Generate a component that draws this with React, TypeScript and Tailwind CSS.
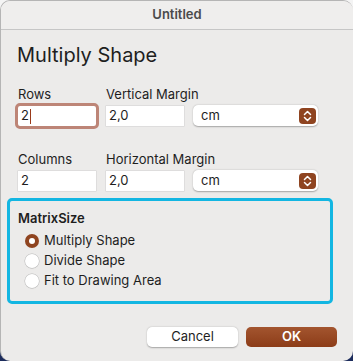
import React from 'react';

const font = { fontFamily: 'Inter, "Liberation Sans", sans-serif' };

const Field = ({ value, w, focus }: { value: string; w: string; focus?: boolean }) => (
  <div
    className={`h-[20px] ${w} bg-white flex items-center pl-[3px] text-[13px] text-[#1e1e1e] ${
      focus ? 'outline-[3px] outline outline-[#bd8577] rounded-[2px]' : 'shadow-[0_0_0_0.5px_#cfcfcf]'
    }`}
  >
    {value}
    {focus && <span className="w-[1.5px] h-[15px] bg-[#9a3a1a] ml-[1px]" />}
  </div>
);

const UnitSelect = () => (
  <div className="h-[21px] w-[125px] shrink-0 bg-white rounded-[5px] shadow-[0_0.5px_1.5px_rgba(0,0,0,0.3)] flex items-center justify-between pl-[8px] pr-[2px] text-[13px] text-[#1e1e1e]">
    <span>cm</span>
    <span className="w-[17px] h-[16px] rounded-[4px] bg-[#8f4420] flex items-center justify-center">
      <svg width="9" height="12" viewBox="0 0 9 12" fill="none" stroke="white" strokeWidth="1.5" strokeLinecap="round" strokeLinejoin="round">
        <path d="M1.5 4.5 L4.5 1.5 L7.5 4.5" />
        <path d="M1.5 7.5 L4.5 10.5 L7.5 7.5" />
      </svg>
    </span>
  </div>
);

const Radio = ({ label, checked }: { label: string; checked?: boolean }) => (
  <div className="flex items-center h-[20px] gap-[5px]">
    {checked ? (
      <span className="w-[14px] h-[14px] rounded-full bg-[#8f4420] flex items-center justify-center">
        <span className="w-[6px] h-[6px] rounded-full bg-white" />
      </span>
    ) : (
      <span className="w-[14px] h-[14px] rounded-full bg-white shadow-[0_0_0_0.5px_#b9b9b9,0_0.5px_1px_rgba(0,0,0,0.15)]" />
    )}
    <span className="text-[13px] text-[#1e1e1e]">{label}</span>
  </div>
);

const Label = ({ children }: { children: React.ReactNode }) => (
  <span className="text-[13px] leading-[16px] text-[#1e1e1e] whitespace-nowrap">{children}</span>
);

export default function App() {
  return (
    <div
      className="w-[353px] h-[361px] bg-[linear-gradient(to_bottom,#f4f4f4_37%,#1c2c5c_37%)]"
      style={font}
    >
      <div className="w-[353px] h-[361px] bg-[#ecebea] rounded-[10px] border border-[#b5b5b5] border-r-0 border-b-0 overflow-hidden flex flex-col">
        <div className="h-[29px] shrink-0 bg-[#efeeed] border-b border-[#c6c6c6] flex items-center justify-center text-[13px] font-semibold text-[#4b4b4b]">
          Untitled
        </div>
        <div className="px-[16px] pt-[13px] flex flex-col">
          <div className="text-[20px] leading-[24px] text-[#1e1e1e]">Multiply Shape</div>

          <div className="mt-[19px] flex items-end">
            <div className="flex flex-col gap-[4px] w-[89px] shrink-0 pl-[1px]">
              <Label>Rows</Label>
              <Field value="2" w="w-[78px]" focus />
            </div>
            <div className="flex flex-col gap-[4px] w-[87px] shrink-0">
              <Label>Vertical Margin</Label>
              <Field value="2,0" w="w-[78px]" />
            </div>
            <UnitSelect />
          </div>

          <div className="mt-[25px] flex items-end">
            <div className="flex flex-col gap-[4px] w-[89px] shrink-0 pl-[1px]">
              <Label>Columns</Label>
              <Field value="2" w="w-[78px]" />
            </div>
            <div className="flex flex-col gap-[4px] w-[87px] shrink-0">
              <Label>Horizontal Margin</Label>
              <Field value="2,0" w="w-[78px]" />
            </div>
            <UnitSelect />
          </div>

          <div className="mt-[7px] -ml-[10px] w-[326px] h-[106px] border-[3px] border-[#13b6e2] rounded-[5px] px-[8px] pt-[9px]">
            <div className="text-[13px] leading-[16px] font-semibold text-[#1e1e1e]">MatrixSize</div>
            <div className="mt-[5px] pl-[7px] flex flex-col">
              <Radio label="Multiply Shape" checked />
              <Radio label="Divide Shape" />
              <Radio label="Fit to Drawing Area" />
            </div>
          </div>

          <div className="mt-[23px] flex justify-end gap-[8px]">
            <button className="w-[91px] h-[20px] bg-white rounded-[5px] shadow-[0_0.5px_1.5px_rgba(0,0,0,0.3)] text-[13px] text-[#1e1e1e]">
              Cancel
            </button>
            <button className="w-[91px] h-[20px] rounded-[5px] bg-[linear-gradient(to_bottom,#a3552f,#8c3c18)] text-[13px] font-semibold text-white">
              OK
            </button>
          </div>
        </div>
      </div>
    </div>
  );
}
